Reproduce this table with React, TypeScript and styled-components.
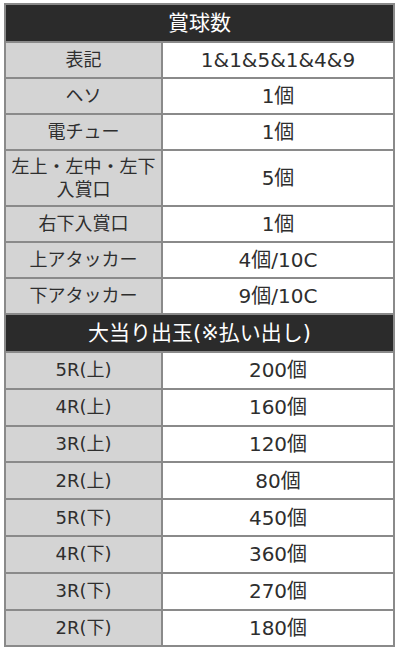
import React from 'react';
import styled, { createGlobalStyle } from 'styled-components';

const GlobalStyle = createGlobalStyle`
  html, body {
    margin: 0;
    padding: 0;
    background: #ffffff;
  }
  body {
    font-family: "DejaVu Sans", "Noto Sans CJK JP", sans-serif;
  }
`;

type Row = { label: React.ReactNode; value: string; tall?: boolean };

const prizeRows: Row[] = [
  { label: '表記', value: '1&1&5&1&4&9' },
  { label: 'ヘソ', value: '1個' },
  { label: '電チュー', value: '1個' },
  {
    label: (
      <>
        左上・左中・左下
        <br />
        入賞口
      </>
    ),
    value: '5個',
    tall: true,
  },
  { label: '右下入賞口', value: '1個' },
  { label: '上アタッカー', value: '4個/10C' },
  { label: '下アタッカー', value: '9個/10C' },
];

const payoutRows: Row[] = [
  { label: '5R(上)', value: '200個' },
  { label: '4R(上)', value: '160個' },
  { label: '3R(上)', value: '120個' },
  { label: '2R(上)', value: '80個' },
  { label: '5R(下)', value: '450個' },
  { label: '4R(下)', value: '360個' },
  { label: '3R(下)', value: '270個' },
  { label: '2R(下)', value: '180個' },
];

const App: React.FC = () => {
  return (
    <>
      <GlobalStyle />
      <Page>
        <SpecTable>
          <colgroup>
            <col style={{ width: '157px' }} />
            <col />
          </colgroup>
          <tbody>
            <HeadRow>
              <HeadCell colSpan={2}>賞球数</HeadCell>
            </HeadRow>
            {prizeRows.map((row, i) => (
              <BodyRow key={`p${i}`} rowHeight={row.tall ? 56 : 36}>
                <LabelCell tall={row.tall}>{row.label}</LabelCell>
                <ValueCell>{row.value}</ValueCell>
              </BodyRow>
            ))}
            <HeadRow>
              <HeadCell colSpan={2}>大当り出玉(※払い出し)</HeadCell>
            </HeadRow>
            {payoutRows.map((row, i) => (
              <BodyRow key={`o${i}`} rowHeight={36.8}>
                <LabelCell>{row.label}</LabelCell>
                <ValueCell>{row.value}</ValueCell>
              </BodyRow>
            ))}
          </tbody>
        </SpecTable>
      </Page>
    </>
  );
};

const Page = styled.div`
  padding: 3px 5px 0 4px;
`;

const SpecTable = styled.table`
  width: 391px;
  border-collapse: collapse;
  table-layout: fixed;
  border: 2px solid #8a8a8a;
`;

const HeadRow = styled.tr`
  height: 38px;
`;

const HeadCell = styled.th`
  padding: 0;
  background-color: #2b2b2b;
  color: #ffffff;
  font-size: 21px;
  line-height: 24px;
  font-weight: 400;
  text-align: center;
  border: 2px solid #8a8a8a;
`;

const BodyRow = styled.tr<{ rowHeight: number }>`
  height: ${({ rowHeight }) => rowHeight}px;
`;

const LabelCell = styled.td<{ tall?: boolean }>`
  padding: 0;
  background-color: #d4d4d4;
  color: #2e2e2e;
  font-size: 18px;
  line-height: ${({ tall }) => (tall ? '23px' : '20px')};
  text-align: center;
  border: 2px solid #8a8a8a;
  white-space: nowrap;
`;

const ValueCell = styled.td`
  padding: 0;
  background-color: #ffffff;
  color: #2e2e2e;
  font-size: 20px;
  line-height: 22px;
  text-align: center;
  border: 2px solid #8a8a8a;
`;

export default App;
